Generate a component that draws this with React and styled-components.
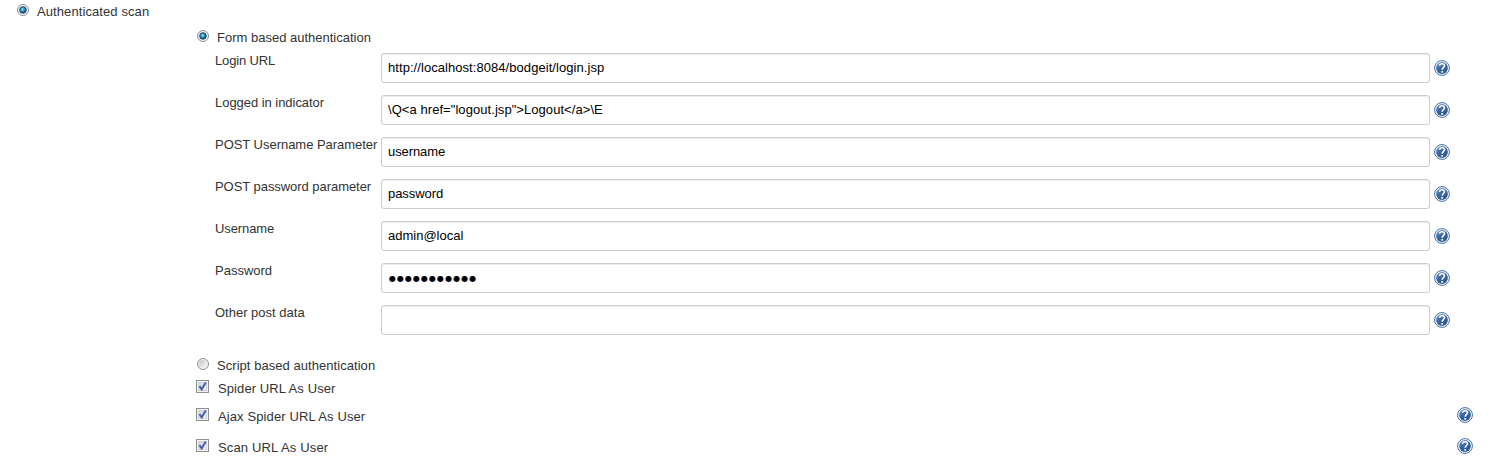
import React from 'react';
import styled, { createGlobalStyle } from 'styled-components';

const GlobalStyle = createGlobalStyle`
  * { box-sizing: border-box; }
  body {
    margin: 0;
    background: #fff;
    color: #333;
    font-family: "Liberation Sans", Arial, sans-serif;
    font-size: 13px;
    line-height: 20px;
  }
`;

const Page = styled.main`
  height: 473px;
  padding: 1px 19px 0 17px;
  overflow: hidden;
`;

const ChoiceRow = styled.label`
  display: flex;
  align-items: flex-start;
  height: ${(p) => p.$height}px;
`;

const ChoiceText = styled.span`
  margin-top: 1px;
  margin-left: ${(p) => p.$gap || 8}px;
  letter-spacing: ${(p) => p.$spacing || 0}px;
  white-space: nowrap;
`;

const Section = styled.section`
  padding-left: 180px;
`;

const RadioMark = styled.svg`
  width: 12px;
  height: 12px;
  margin-top: 3px;
  flex: none;
`;

const CheckMark = styled.svg`
  width: 13px;
  height: 13px;
  margin: 2px 0 0 -1px;
  flex: none;
`;

const Fields = styled.div`
  padding: 6px 0 8px 18px;
`;

const FieldRow = styled.div`
  display: grid;
  grid-template-columns: 166px 1049px 20px;
  height: 42px;
`;

const FieldLabel = styled.label`
  margin-top: -2px;
  letter-spacing: ${(p) => p.$spacing || 0}px;
  white-space: nowrap;
`;

const TextInput = styled.input`
  width: 1049px;
  height: 30px;
  padding: 3px 6px 5px;
  border: 1px solid #ccc;
  border-radius: 3px;
  outline: none;
  background: #fff;
  box-shadow: inset 0 1px 1px rgba(0, 0, 0, 0.075);
  color: #000;
  font: 13px/20px "Liberation Sans", Arial, sans-serif;
  letter-spacing: ${(p) => p.$spacing || 0}px;
`;

const MaskedInput = styled(TextInput)`
  padding: 4px 6px 4px 7px;
  font-family: "DejaVu Sans", sans-serif;
  font-size: 8px;
  letter-spacing: 1.04px;
`;

const HelpMark = styled.svg`
  width: 16px;
  height: 16px;
  flex: none;
  margin: ${(p) => p.$margin};
`;

function Radio({ on }) {
  return (
    <RadioMark viewBox="0 0 12 12">
      <defs>
        <linearGradient id="radioFace" x1="0" y1="0" x2="1" y2="1">
          <stop offset="0.2" stopColor="#c9cdd2" />
          <stop offset="0.9" stopColor="#f8f8f8" />
        </linearGradient>
        <radialGradient id="radioDot" cx="0.42" cy="0.4" r="0.6">
          <stop offset="0" stopColor="#8ee4fb" />
          <stop offset="0.5" stopColor="#2a94cc" />
          <stop offset="1" stopColor="#123a60" />
        </radialGradient>
      </defs>
      <circle cx="6" cy="6" r="5.5" fill="#f4f4f4" stroke="#8e8f8f" />
      <circle cx="6" cy="6" r="4" fill="url(#radioFace)" />
      {on && <circle cx="6" cy="6" r="3.3" fill="url(#radioDot)" stroke="#153651" strokeWidth="0.7" />}
    </RadioMark>
  );
}

function Check() {
  return (
    <CheckMark viewBox="0 0 13 13">
      <defs>
        <linearGradient id="checkFace" x1="0" y1="0" x2="1" y2="1">
          <stop offset="0" stopColor="#ccd1d8" />
          <stop offset="1" stopColor="#f8f8f8" />
        </linearGradient>
      </defs>
      <rect x="0.5" y="0.5" width="12" height="12" fill="#f4f4f4" stroke="#8e8f8f" />
      <rect x="2.5" y="2.5" width="8" height="8" fill="url(#checkFace)" stroke="#cfd3d8" />
      <path d="M3.4 6.2 L5.7 9.4 L9.7 2.6" fill="none" stroke="#4560ab" strokeWidth="2" />
    </CheckMark>
  );
}

function Help({ margin }) {
  return (
    <HelpMark viewBox="0 0 16 16" $margin={margin}>
      <defs>
        <linearGradient id="helpFace" x1="0" y1="0" x2="0.6" y2="1">
          <stop offset="0" stopColor="#7d9cc8" />
          <stop offset="0.5" stopColor="#3968a6" />
          <stop offset="1" stopColor="#2b5792" />
        </linearGradient>
      </defs>
      <circle cx="8" cy="8" r="7.4" fill="#fff" stroke="#3f6ca6" strokeWidth="1" />
      <circle cx="8" cy="8" r="5.9" fill="url(#helpFace)" />
      <path d="M5.6 5.8 C5.7 4.3 6.7 3.7 8 3.7 C9.5 3.7 10.5 4.5 10.5 5.8 C10.5 7.4 8.2 7.6 8.2 9.8" fill="none" stroke="#fff" strokeWidth="1.6" />
      <rect x="7.3" y="11" width="1.8" height="1.7" fill="#fff" />
    </HelpMark>
  );
}

const fields = [
  { label: 'Login URL', value: 'http://localhost:8084/bodgeit/login.jsp', labelSpacing: -0.15, spacing: 0.06 },
  { label: 'Logged in indicator', value: '\\Q<a href="logout.jsp">Logout</a>\\E', labelSpacing: -0.04, spacing: 0.06 },
  { label: 'POST Username Parameter', value: 'username', labelSpacing: -0.03, spacing: -0.1 },
  { label: 'POST password parameter', value: 'password', labelSpacing: -0.05, spacing: -0.05 },
  { label: 'Username', value: 'admin@local', labelSpacing: -0.1 },
  { label: 'Password', value: '●●●●●●●●●●●', masked: true },
  { label: 'Other post data', value: '' },
];

const HelpRow = styled.div`
  display: flex;
  justify-content: space-between;
`;

export default function App() {
  return (
    <Page>
      <GlobalStyle />
      <ChoiceRow $height={26}>
        <Radio on />
        <ChoiceText $spacing={0.09}>Authenticated scan</ChoiceText>
      </ChoiceRow>
      <Section>
        <ChoiceRow $height={20}>
          <Radio on />
          <ChoiceText>Form based authentication</ChoiceText>
        </ChoiceRow>
        <Fields>
          {fields.map((f) => {
            const Input = f.masked ? MaskedInput : TextInput;
            return (
              <FieldRow key={f.label}>
                <FieldLabel $spacing={f.labelSpacing}>{f.label}</FieldLabel>
                <Input
                  defaultValue={f.value}
                  aria-label={f.label}
                  spellCheck={false}
                  $spacing={f.spacing}
                />
                <Help margin="7px 0 0 4px" />
              </FieldRow>
            );
          })}
        </Fields>
        <ChoiceRow $height={23}>
          <Radio />
          <ChoiceText $spacing={0.05}>Script based authentication</ChoiceText>
        </ChoiceRow>
        <ChoiceRow $height={28}>
          <Check />
          <ChoiceText $gap={9} $spacing={0.09}>Spider URL As User</ChoiceText>
        </ChoiceRow>
        <HelpRow>
          <ChoiceRow $height={31}>
            <Check />
            <ChoiceText $gap={9} $spacing={0.11}>Ajax Spider URL As User</ChoiceText>
          </ChoiceRow>
          <Help margin="1px 0 0" />
        </HelpRow>
        <HelpRow>
          <ChoiceRow $height={26}>
            <Check />
            <ChoiceText $gap={9} $spacing={0.15}>Scan URL As User</ChoiceText>
          </ChoiceRow>
          <Help margin="1px 0 0" />
        </HelpRow>
      </Section>
    </Page>
  );
}
